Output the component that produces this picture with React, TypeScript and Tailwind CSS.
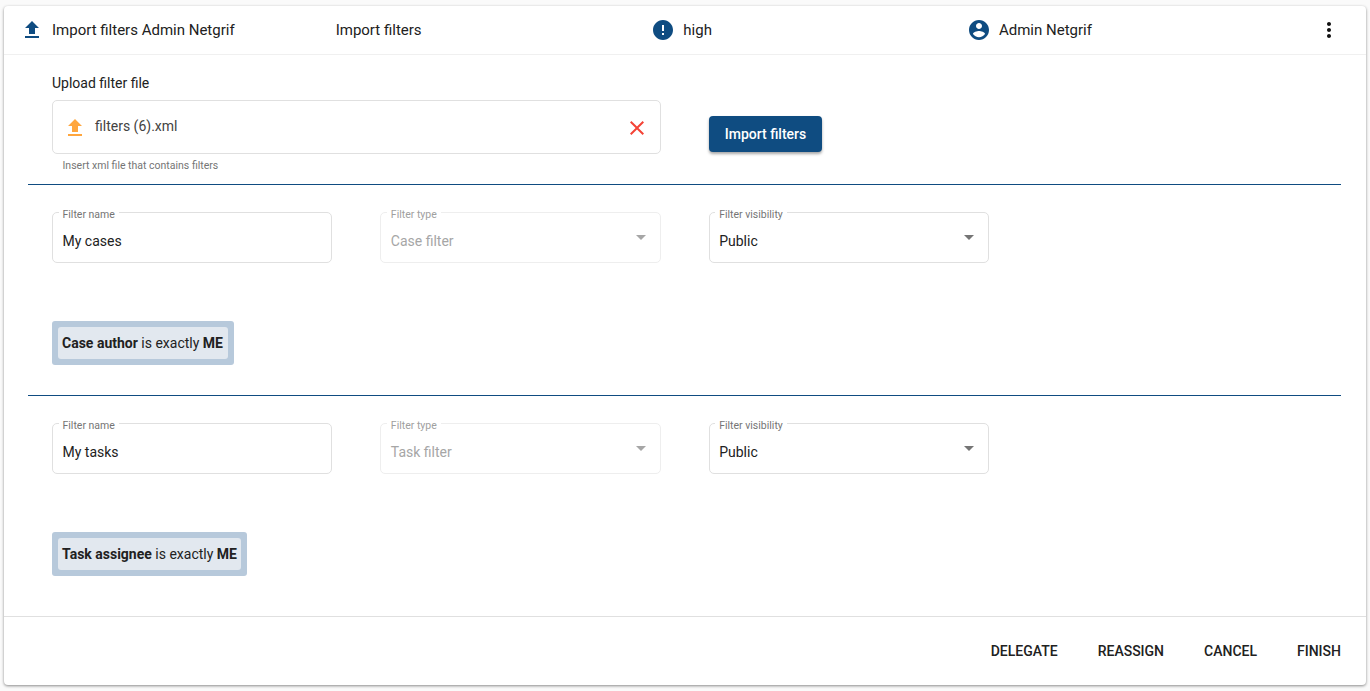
import React from 'react'

const PATHS = {
    upload: 'M9 16h6v-6h4l-7-7-7 7h4zm-4 2h14v2H5z',
    error: 'M12 2C6.48 2 2 6.48 2 12s4.48 10 10 10 10-4.48 10-10S17.52 2 12 2zm1 15h-2v-2h2v2zm0-4h-2V7h2v6z',
    account: 'M12 2C6.48 2 2 6.48 2 12s4.48 10 10 10 10-4.48 10-10S17.52 2 12 2zm0 3c1.66 0 3 1.34 3 3s-1.34 3-3 3-3-1.34-3-3 1.34-3 3-3zm0 14.2c-2.5 0-4.71-1.28-6-3.22.03-1.99 4-3.08 6-3.08 1.99 0 5.97 1.09 6 3.08-1.29 1.94-3.5 3.22-6 3.22z',
    more: 'M12 8c1.1 0 2-.9 2-2s-.9-2-2-2-2 .9-2 2 .9 2 2 2zm0 2c-1.1 0-2 .9-2 2s.9 2 2 2 2-.9 2-2-.9-2-2-2zm0 6c-1.1 0-2 .9-2 2s.9 2 2 2 2-.9 2-2-.9-2-2-2z',
    close: 'M19 6.41L17.59 5 12 10.59 6.41 5 5 6.41 10.59 12 5 17.59 6.41 19 12 13.41 17.59 19 19 17.59 13.41 12z',
}

const Icon = ({ d, className }: { d: string; className: string }) => (
    <svg viewBox="0 0 24 24" width="24" height="24" fill="currentColor" className={className}>
        <path d={d} />
    </svg>
)

const Field = ({ label, value, disabled, select }: { label: string; value: string; disabled?: boolean; select?: boolean }) => (
    <div className={`relative w-[280.33px] h-[51px] rounded-[5px] border flex items-center px-[9.5px] pt-[8px] text-[14px] ${disabled ? 'border-[#eeeeee] text-[#a6a6a6]' : 'border-[#e0e0e0] text-[#212121]'}`}>
        <span className={`absolute left-[5.5px] -top-[3px] bg-white px-[4px] text-[10.5px] leading-[10px] ${disabled ? 'text-[#a0a0a0]' : 'text-[#757575]'}`}>{label}</span>
        <span>{value}</span>
        {select && (
            <span className={`absolute right-[14px] top-[22px] w-0 h-0 border-x-[5px] border-x-transparent border-t-[5px] ${disabled ? 'border-t-[#a6a6a6]' : 'border-t-[#757575]'}`} />
        )}
    </div>
)

const FilterRow = ({ name, type }: { name: string; type: string }) => (
    <div className="flex gap-[48px] pl-[24px]">
        <Field label="Filter name" value={name} />
        <Field label="Filter type" value={type} disabled select />
        <Field label="Filter visibility" value="Public" select />
    </div>
)

const Chip = ({ subject, bold, width }: { subject: string; bold: string; width: string }) => (
    <div className={`ml-[24px] mt-[58px] rounded-[3px] bg-[#b7c9db] p-[6px] ${width}`}>
        <div className="h-[32px] flex items-center rounded-[3px] bg-[#e2e8ef] px-[4px] text-[14px] text-[#212121] whitespace-pre">
            <b className="font-bold">{subject}</b> is exactly <b className="font-bold">{bold}</b>
        </div>
    </div>
)

const HeaderCell = ({ d, text }: { d?: string; text: string }) => (
    <div className="w-[315.67px] flex items-center gap-[8px]">
        {d && <Icon d={d} className="text-[#0f4c81] shrink-0" />}
        <span>{text}</span>
    </div>
)

const App = () => {
    return (
        <div className="h-[691px] bg-[#fafafa] pt-[6px] px-[4px] font-['Roboto',sans-serif] overflow-hidden">
            <div className="h-[679px] bg-white rounded-[4px] shadow-[0_1px_3px_rgba(0,0,0,0.45)] flex flex-col">
                <div className="h-[49px] shrink-0 flex items-center pl-[16px] pr-[25px] border-b border-[#f0f0f0] text-[15px] text-[#212121]">
                    <HeaderCell d={PATHS.upload} text="Import filters Admin Netgrif" />
                    <HeaderCell text="Import filters" />
                    <HeaderCell d={PATHS.error} text="high" />
                    <HeaderCell d={PATHS.account} text="Admin Netgrif" />
                    <Icon d={PATHS.more} className="ml-auto text-[#111111]" />
                </div>

                <div className="flex-1 pl-[24px] pr-[25px]">
                    <div className="flex items-start pl-[24px] pt-[19px]">
                        <div className="w-[609px]">
                            <p className="text-[14px] leading-[18px] text-[#212121]">Upload filter file</p>
                            <div className="mt-[8px] h-[54px] rounded-[5px] border border-[#e0e0e0] flex items-center pl-[10px] pr-[11px] pt-[2px] text-[14px] text-[#424242]">
                                <Icon d={PATHS.upload} className="text-[#ffa63d] mr-[8px]" />
                                <span className="-mt-[4px]">filters (6).xml</span>
                                <Icon d={PATHS.close} className="ml-auto text-[#f44336]" />
                            </div>
                            <p className="mt-[6px] pl-[10.5px] text-[10.5px] leading-[12px] text-[#757575]">Insert xml file that contains filters</p>
                        </div>
                        <button className="ml-[48px] mt-[42px] h-[36px] w-[113px] rounded-[4px] bg-[#0f4c81] text-white text-[14px] font-medium shadow-[0_2px_3px_rgba(0,0,0,0.35)]">Import filters</button>
                    </div>

                    <div className="mt-[12px] h-px bg-[#0f4c81] mb-[27px]" />
                    <FilterRow name="My cases" type="Case filter" />
                    <Chip subject="Case author" bold="ME" width="w-[182px]" />

                    <div className="mt-[30px] h-px bg-[#0f4c81] mb-[27px]" />
                    <FilterRow name="My tasks" type="Task filter" />
                    <Chip subject="Task assignee" bold="ME" width="w-[195px]" />
                </div>

                <div className="h-[69px] shrink-0 border-t border-[#e0e0e0] flex items-center justify-end gap-[40px] pr-[25px] text-[14px] font-medium text-[#212121]">
                    <span>DELEGATE</span>
                    <span>REASSIGN</span>
                    <span>CANCEL</span>
                    <span>FINISH</span>
                </div>
            </div>
        </div>
    )
}

export default App
